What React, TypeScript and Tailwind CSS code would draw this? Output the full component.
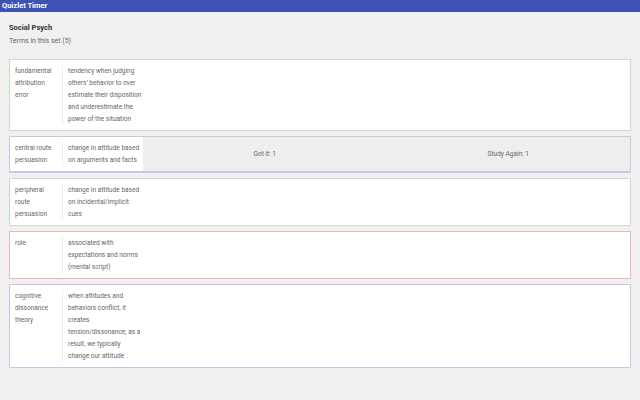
import React from 'react';

type Term = {
  term: string;
  definition: string;
  border: string;
  summary?: boolean;
};

const terms: Term[] = [
  {
    term: 'fundamental attribution error',
    definition:
      'tendency when judging others\u2019 behavior to over estimate their disposition and underestimate the power of the situation',
    border: 'border-[#c5e1c5]',
  },
  {
    term: 'central route persuasion',
    definition: 'change in attitude based on arguments and facts',
    border: 'border-[#c5c8e6]',
    summary: true,
  },
  {
    term: 'peripheral route persuasion',
    definition: 'change in attitude based on incidental/implicit cues',
    border: 'border-[#c5e1c5]',
  },
  {
    term: 'role',
    definition: 'associated with expectations and norms (mental script)',
    border: 'border-[#efb5b5]',
  },
  {
    term: 'cognitive dissonance theory',
    definition:
      'when attitudes and behaviors conflict, it creates tension/dissonance; as a result, we typically change our attitude',
    border: 'border-[#c5c8e6]',
  },
];

const TermCard: React.FC<{ item: Term }> = ({ item }) => (
  <div
    className={`flex bg-white border ${item.border} ${item.summary ? 'border-b-2' : ''}`}
  >
    <div className="flex py-[5px] pl-[5px] bg-white">
      <div className="w-[48px] border-r border-[#eeeeee] pr-[4px]">{item.term}</div>
      <div className="w-[80px] pl-[5px]">{item.definition}</div>
    </div>
    {item.summary && (
      <div className="flex flex-1 items-center bg-[#eeeeee]">
        <div className="flex-1 text-center">Got it: 1</div>
        <div className="flex-1 text-center">Study Again: 1</div>
      </div>
    )}
  </div>
);

export default function App() {
  return (
    <div className="w-[640px] h-[400px] bg-[#f0f0f0] font-['Roboto','Liberation_Sans',sans-serif] overflow-hidden antialiased">
      <div className="h-[12px] bg-[#3f51b5] pl-[2px] text-[7.5px] leading-[12px] font-bold text-white">
        Quizlet Timer
      </div>
      <div className="px-[9px]">
        <div className="pt-[11px] text-[7.5px] leading-[10px] font-bold text-[#333333]">
          Social Psych
        </div>
        <div className="pt-[3px] text-[7px] leading-[10px] text-[#666666]">
          Terms in this set (5)
        </div>
        <div className="mt-[13px] flex flex-col gap-[5px] text-[6.5px] leading-[12px] text-[#666666]">
          {terms.map((t) => (
            <TermCard key={t.term} item={t} />
          ))}
        </div>
      </div>
    </div>
  );
}
